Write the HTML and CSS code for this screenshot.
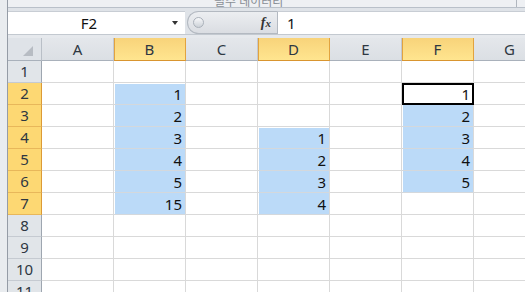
FILE: index.html
```html
<!DOCTYPE html>
<html lang="ko">
<head>
    <meta charset="UTF-8">
    <title>Sheet1</title>
    <link rel="stylesheet" href="styles.css">
</head>
<body>

<div class="window">
    <div class="gutter"></div>
    <div class="main">
        <!-- bottom edge of the ribbon -->
        <div class="ribbon">
            <span class="ribbon-title">필수 데이터리</span>
            <span class="ribbon-sep"></span>
        </div>

        <!-- name box + formula bar -->
        <div class="formula-bar">
            <div class="name-box">
                <span class="name">F2</span>
                <span class="drop"></span>
            </div>
            <div class="fx-area">
                <div class="pill">
                    <span class="knob"></span>
                    <span class="fx">f<span class="fx-x">x</span></span>
                </div>
            </div>
            <div class="formula">1</div>
        </div>

        <div class="band"></div>

        <!-- worksheet -->
        <div class="sheet">
            <div class="corner"><span class="corner-tri"></span></div>
            <div class="ch">A</div>
            <div class="ch hl">B</div>
            <div class="ch">C</div>
            <div class="ch hl">D</div>
            <div class="ch">E</div>
            <div class="ch hl">F</div>
            <div class="ch">G</div>

            <div class="rh">1</div>
            <div class="c"></div><div class="c"></div><div class="c"></div><div class="c"></div><div class="c"></div><div class="c"></div><div class="c"></div>

            <div class="rh hl">2</div>
            <div class="c"></div><div class="c sel first">1</div><div class="c"></div><div class="c"></div><div class="c"></div><div class="c active">1</div><div class="c"></div>

            <div class="rh hl">3</div>
            <div class="c"></div><div class="c sel">2</div><div class="c"></div><div class="c"></div><div class="c"></div><div class="c sel">2</div><div class="c"></div>

            <div class="rh hl">4</div>
            <div class="c"></div><div class="c sel">3</div><div class="c"></div><div class="c sel first">1</div><div class="c"></div><div class="c sel">3</div><div class="c"></div>

            <div class="rh hl">5</div>
            <div class="c"></div><div class="c sel">4</div><div class="c"></div><div class="c sel">2</div><div class="c"></div><div class="c sel">4</div><div class="c"></div>

            <div class="rh hl">6</div>
            <div class="c"></div><div class="c sel">5</div><div class="c"></div><div class="c sel">3</div><div class="c"></div><div class="c sel">5</div><div class="c"></div>

            <div class="rh hl">7</div>
            <div class="c"></div><div class="c sel">15</div><div class="c"></div><div class="c sel">4</div><div class="c"></div><div class="c"></div><div class="c"></div>

            <div class="rh">8</div>
            <div class="c"></div><div class="c"></div><div class="c"></div><div class="c"></div><div class="c"></div><div class="c"></div><div class="c"></div>

            <div class="rh">9</div>
            <div class="c"></div><div class="c"></div><div class="c"></div><div class="c"></div><div class="c"></div><div class="c"></div><div class="c"></div>

            <div class="rh">10</div>
            <div class="c"></div><div class="c"></div><div class="c"></div><div class="c"></div><div class="c"></div><div class="c"></div><div class="c"></div>

            <div class="rh">11</div>
            <div class="c"></div><div class="c"></div><div class="c"></div><div class="c"></div><div class="c"></div><div class="c"></div><div class="c"></div>
        </div>
    </div>
</div>

</body>
</html>
```

FILE: styles.css
```css
body {
    margin: 0;
    font-family: "Noto Sans", "Noto Sans CJK KR", sans-serif;
    background-color: #fff;
    overflow: hidden;
}

.window {
    display: flex;
    width: 525px;
    height: 292px;
    overflow: hidden;
}

.gutter {
    flex: none;
    width: 7px;
    background-color: #e9ecef;
    border-right: 1px solid #959ca6;
}

.main {
    flex: 1;
    min-width: 0;
    display: flex;
    flex-direction: column;
}

/* ribbon edge */
.ribbon {
    height: 7px;
    flex: none;
    display: flex;
    align-items: flex-end;
    overflow: hidden;
    background-color: #eef0f3;
    border-bottom: 1px solid #b9c0c9;
}

.ribbon-title {
    margin-left: 206px;
    font-size: 12px;
    line-height: 12px;
    color: #8a8f96;
    margin-bottom: -1px;
}

.ribbon-sep {
    margin-left: auto;
    margin-right: 8px;
    width: 1px;
    height: 7px;
    background-color: #b0b6be;
}

/* formula bar */
.formula-bar {
    height: 26px;
    flex: none;
    display: flex;
    background-color: #dfe3e8;
    padding-top: 3px;
    box-sizing: border-box;
}

.name-box {
    width: 177px;
    flex: none;
    display: flex;
    align-items: center;
    background-color: #fff;
    border-top: 1px solid #c8cdd4;
    box-sizing: border-box;
}

.name {
    width: 162px;
    text-align: center;
    font-size: 15px;
    color: #111;
}

.drop {
    width: 0;
    height: 0;
    border-left: 3px solid transparent;
    border-right: 3px solid transparent;
    border-top: 4px solid #333;
    margin-left: 2px;
}

.fx-area {
    width: 92px;
    flex: none;
    display: flex;
    padding-left: 2px;
    box-sizing: border-box;
}

.pill {
    flex: 1;
    display: flex;
    align-items: center;
    justify-content: space-between;
    background: linear-gradient(#eceef1, #dadde2);
    border: 1px solid #b3b9c1;
    border-right: none;
    border-radius: 12px 0 0 12px;
    padding: 0 6px 0 5px;
}

.knob {
    width: 9px;
    height: 9px;
    border-radius: 50%;
    background: linear-gradient(#f7f8fa, #cdd2d8);
    border: 1px solid #aab1ba;
}

.fx {
    font-family: "Liberation Serif", serif;
    font-style: italic;
    font-weight: bold;
    font-size: 14px;
    color: #333;
}

.fx-x {
    font-size: 11px;
}

.formula {
    flex: 1;
    background-color: #fff;
    border-left: 1px solid #b3b9c1;
    border-top: 1px solid #c8cdd4;
    font-size: 15px;
    line-height: 22px;
    padding-left: 9px;
    color: #111;
}

.band {
    height: 4px;
    flex: none;
    background-color: #e6e9ed;
    border-top: 1px solid #c3c9d0;
    box-sizing: border-box;
}

/* worksheet grid */
.sheet {
    display: grid;
    grid-template-columns: 34px repeat(7, 72px);
    grid-template-rows: 23px repeat(11, 22px);
    font-size: 15px;
}

.sheet > div {
    box-sizing: border-box;
    border-right: 1px solid #d9d9d9;
    border-bottom: 1px solid #d9d9d9;
}

.corner {
    position: relative;
    background-color: #dfe3e8;
    border-right-color: #b9bfc7 !important;
    border-bottom-color: #a9b1bb !important;
}

.corner-tri {
    position: absolute;
    right: 8px;
    bottom: 4px;
    width: 10px;
    height: 10px;
    background-color: #b7bcc3;
    clip-path: polygon(100% 0, 100% 100%, 0 100%);
}

.ch {
    background: linear-gradient(#e4e7eb, #dbdfe4);
    border-right-color: #c3c8cf !important;
    border-bottom-color: #a9b1bb !important;
    text-align: center;
    line-height: 22px;
    color: #2e3742;
}

.ch.hl {
    background: linear-gradient(#f8d37a, #ffe58f);
    border-right-color: #e2a33f !important;
    border-bottom-color: #d9952f !important;
    box-shadow: inset 1px 0 #e2a33f;
}

.rh {
    background-color: #e1e5e9;
    border-right-color: #9ea6b0 !important;
    border-bottom-color: #c5cad1 !important;
    text-align: center;
    line-height: 21px;
    color: #2e3742;
}

.rh.hl {
    background-color: #fdd873;
    border-right-color: #dc9a36 !important;
    border-bottom-color: #e8b75a !important;
}

.c {
    text-align: right;
    padding-right: 3px;
    line-height: 22px;
    color: #111;
}

.c.sel {
    background-color: #bbdaf8;
    border-bottom-color: #d4d8dc !important;
    box-shadow: inset 1px 0 #fff;
}

.c.sel.first {
    box-shadow: inset 1px 1px #fff;
}

.c.active {
    outline: 2px solid #000;
    outline-offset: -2px;
}
```
